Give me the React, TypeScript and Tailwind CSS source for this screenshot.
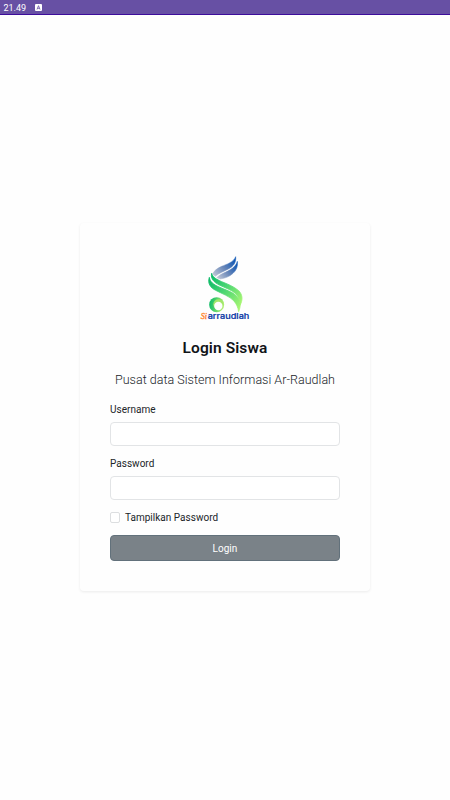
import { useState } from "react";

const Logo = () => (
    <svg viewBox="0 0 210 225" className="w-[70px] h-[75px]">
        <defs>
            <linearGradient id="blue" x1="0" y1="0.9" x2="1" y2="0.2">
                <stop offset="0" stopColor="#c2c8d6" />
                <stop offset="0.5" stopColor="#6685b8" />
                <stop offset="1" stopColor="#0b55b4" />
            </linearGradient>
            <linearGradient id="green" x1="0" y1="0" x2="1" y2="1">
                <stop offset="0" stopColor="#04b765" />
                <stop offset="0.45" stopColor="#4cd673" />
                <stop offset="1" stopColor="#b2fa72" />
            </linearGradient>
            <linearGradient id="ring" x1="0" y1="0" x2="1" y2="0.2">
                <stop offset="0" stopColor="#06b869" />
                <stop offset="0.4" stopColor="#3fcb6a" />
                <stop offset="1" stopColor="#b0f073" />
            </linearGradient>
        </defs>
        <g fill="url(#blue)" stroke="url(#blue)" strokeWidth="1.5">
            <path d="M137 20 C132 36 110 43 95 49 C82 55 72 62 67 73 L76 79 C86 69 101 65 115 57 C130 49 139 38 137 20Z" />
            <path d="M142 34 C138 51 121 60 106 67 C94 72 86 77 80 83 L91 87 C104 85 119 80 129 70 C140 60 144 48 142 34Z" />
        </g>
        <g fill="url(#green)" stroke="url(#green)" strokeWidth="2.5">
            <path d="M65 70 C61 86 72 97 88 105 C106 114 124 119 137 131 C146 140 151 151 150 166 C159 150 158 134 146 122 C131 109 112 102 95 95 C80 88 67 82 65 70Z" />
            <path d="M58 82 C52 100 61 113 77 121 C96 131 119 139 131 152 C140 162 144 172 146 185 C154 166 151 149 139 137 C125 124 104 119 87 111 C71 104 60 96 58 82Z" />
        </g>
        <circle cx="80" cy="164" r="22.5" fill="url(#ring)" />
        <circle cx="85" cy="163" r="15" fill="#a3e66b" />
        <circle cx="85" cy="168" r="12.5" fill="#fefefe" />
        <text
            x="32"
            y="206"
            fontSize="26"
            fontStyle="italic"
            fontFamily="Liberation Serif, serif"
            fill="#ff8126"
            stroke="#ff8126"
            textLength="19"
            lengthAdjust="spacingAndGlyphs"
        >
            Si
        </text>
        <text
            x="53"
            y="206.5"
            fontSize="24"
            fontWeight="500"
            fontFamily="Inter, sans-serif"
            fill="#0736a4"
            stroke="#0736a4"
            strokeWidth="0.6"
            textLength="125"
            lengthAdjust="spacingAndGlyphs"
        >
            arraudlah
        </text>
    </svg>
);

const App = () => {
    const [showPassword, setShowPassword] = useState(false);

    return (
        <div className="min-h-screen flex flex-col bg-[#fefefe] font-[Roboto,sans-serif] text-[#212529]">
            <header className="h-[15px] shrink-0 flex items-center gap-[9px] pl-[3.5px] bg-[#6750a4] border-b border-[#3d0c9b] text-white">
                <span className="text-[9px] leading-[14px] pt-px">21.49</span>
                <svg viewBox="0 0 7 7" className="size-[7px]">
                    <rect width="7" height="7" rx="1" fill="#fff" />
                    <path
                        d="M2 5.5 L3.5 1.7 L5 5.5 M2.5 4.3 H4.5"
                        fill="none"
                        stroke="#6750a4"
                        strokeWidth="0.8"
                    />
                </svg>
            </header>
            <main className="flex-1 flex flex-col items-center pt-[208px]">
                <section className="w-[290px] h-[368px] px-[30px] pt-[27px] flex flex-col rounded-[4px] bg-[#fefefe] shadow-[0_1px_3px_rgba(0,0,0,0.08)]">
                    <div className="flex justify-center">
                        <Logo />
                    </div>
                    <h1 className="mt-[13px] text-center text-[15.5px] leading-[20px] font-semibold tracking-[0.1px] text-[#111418]">
                        Login Siswa
                    </h1>
                    <p className="mt-[12px] text-center text-[12.5px] leading-[20px] font-light tracking-[0.02px] whitespace-nowrap">
                        Pusat data Sistem Informasi Ar-Raudlah
                    </p>
                    <form onSubmit={(e) => e.preventDefault()}>
                        <label
                            htmlFor="username"
                            className="block mt-[12px] text-[10px] leading-[15px] tracking-[0.02px]"
                        >
                            Username
                        </label>
                        <input
                            id="username"
                            className="block mt-[5px] w-full h-[24px] px-2 text-[10px] border border-[#e2e4e6] rounded-[4px] bg-white"
                        />
                        <label
                            htmlFor="password"
                            className="block mt-[10px] text-[10px] leading-[15px] tracking-[0.02px]"
                        >
                            Password
                        </label>
                        <input
                            id="password"
                            type={showPassword ? "text" : "password"}
                            className="block mt-[5px] w-full h-[24px] px-2 text-[10px] border border-[#e2e4e6] rounded-[4px] bg-white"
                        />
                        <label className="mt-[10px] flex items-center gap-[5px] text-[10px] leading-[15px] tracking-[0.02px]">
                            <input
                                type="checkbox"
                                checked={showPassword}
                                onChange={(e) => setShowPassword(e.target.checked)}
                                className="appearance-none w-[10px] h-[11px] border border-[#dcdee0] rounded-[2px] bg-white checked:bg-[#7a8288]"
                            />
                            Tampilkan Password
                        </label>
                        <button className="mt-[10px] w-full h-[26px] rounded-[4px] border border-[#62717b] bg-[#7a8288] text-[10px] leading-[15px] tracking-[0.02px] text-white">
                            Login
                        </button>
                    </form>
                </section>
            </main>
        </div>
    );
};

export default App;
